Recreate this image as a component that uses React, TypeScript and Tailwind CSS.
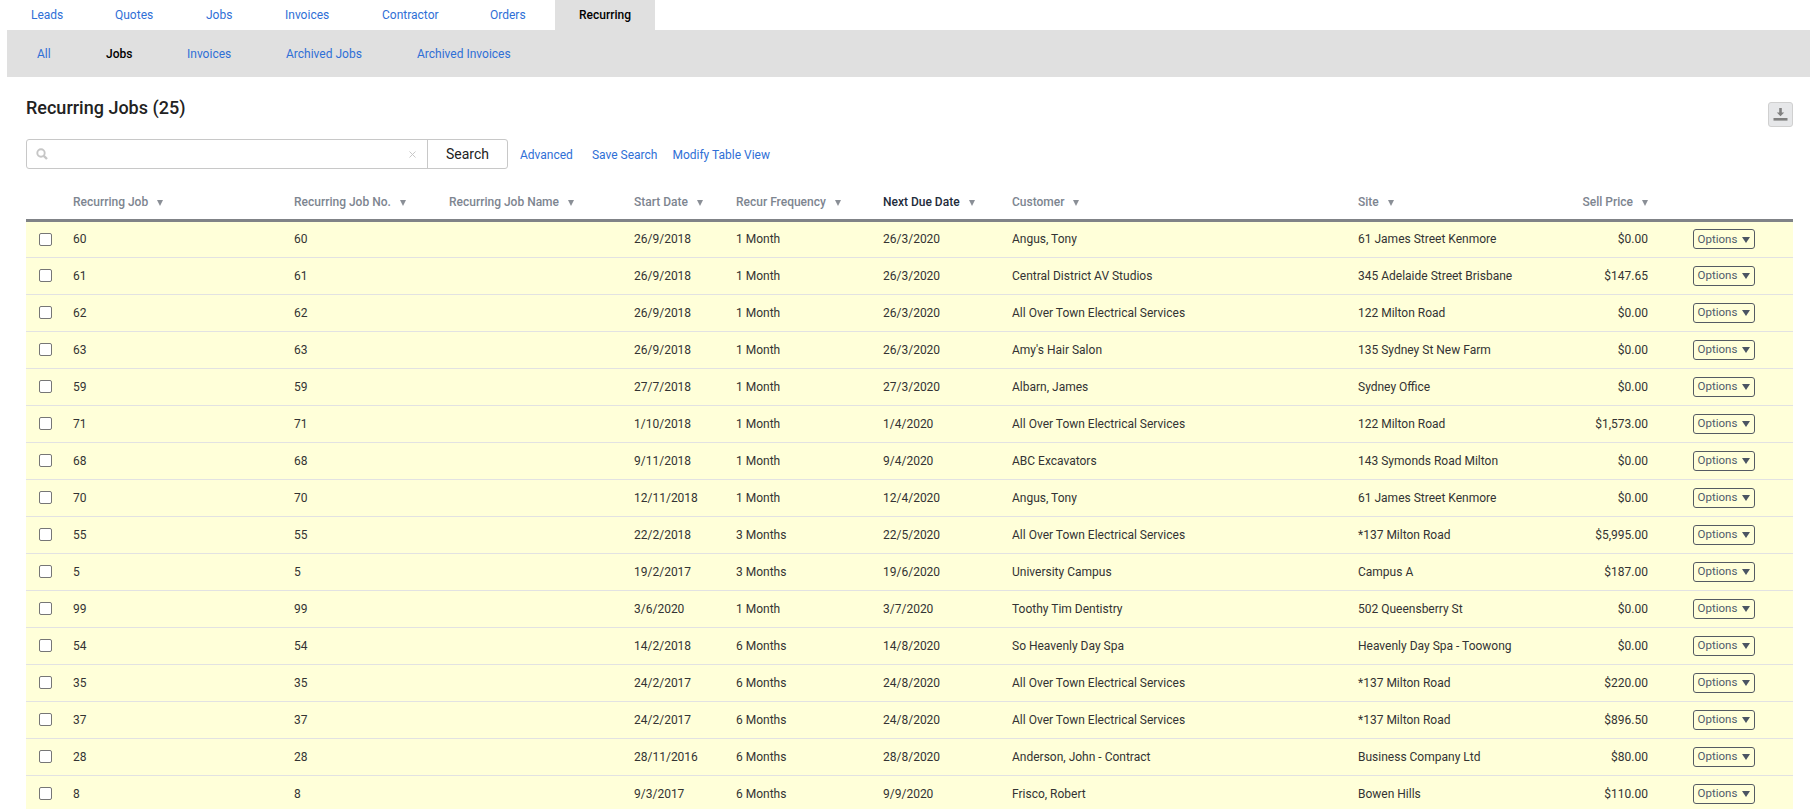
import React from 'react';
import { X } from 'lucide-react';

const topTabs = [
  { label: 'Leads', width: 'w-[84px]' },
  { label: 'Quotes', width: 'w-[91px]' },
  { label: 'Jobs', width: 'w-[79px]' },
  { label: 'Invoices', width: 'w-[97px]' },
  { label: 'Contractor', width: 'w-[108px]' },
  { label: 'Orders', width: 'w-[89px]' },
];

const subTabs = [
  { label: 'All', width: 'w-[69px]' },
  { label: 'Jobs', width: 'w-[81px]', active: true },
  { label: 'Invoices', width: 'w-[99px]' },
  { label: 'Archived Jobs', width: 'w-[131px]' },
  { label: 'Archived Invoices', width: 'w-[140px]' },
];

const columns = [
  { label: 'Recurring Job', width: 'w-[221px]' },
  { label: 'Recurring Job No.', width: 'w-[155px]' },
  { label: 'Recurring Job Name', width: 'w-[185px]' },
  { label: 'Start Date', width: 'w-[102px]' },
  { label: 'Recur Frequency', width: 'w-[147px]' },
  { label: 'Next Due Date', width: 'w-[129px]', active: true },
  { label: 'Customer', width: 'w-[346px]' },
  { label: 'Site', width: 'w-[224px]' },
];

const rows = [
  ['60', '60', '', '26/9/2018', '1 Month', '26/3/2020', 'Angus, Tony', '61 James Street Kenmore', '$0.00'],
  ['61', '61', '', '26/9/2018', '1 Month', '26/3/2020', 'Central District AV Studios', '345 Adelaide Street Brisbane', '$147.65'],
  ['62', '62', '', '26/9/2018', '1 Month', '26/3/2020', 'All Over Town Electrical Services', '122 Milton Road', '$0.00'],
  ['63', '63', '', '26/9/2018', '1 Month', '26/3/2020', "Amy's Hair Salon", '135 Sydney St New Farm', '$0.00'],
  ['59', '59', '', '27/7/2018', '1 Month', '27/3/2020', 'Albarn, James', 'Sydney Office', '$0.00'],
  ['71', '71', '', '1/10/2018', '1 Month', '1/4/2020', 'All Over Town Electrical Services', '122 Milton Road', '$1,573.00'],
  ['68', '68', '', '9/11/2018', '1 Month', '9/4/2020', 'ABC Excavators', '143 Symonds Road Milton', '$0.00'],
  ['70', '70', '', '12/11/2018', '1 Month', '12/4/2020', 'Angus, Tony', '61 James Street Kenmore', '$0.00'],
  ['55', '55', '', '22/2/2018', '3 Months', '22/5/2020', 'All Over Town Electrical Services', '*137 Milton Road', '$5,995.00'],
  ['5', '5', '', '19/2/2017', '3 Months', '19/6/2020', 'University Campus', 'Campus A', '$187.00'],
  ['99', '99', '', '3/6/2020', '1 Month', '3/7/2020', 'Toothy Tim Dentistry', '502 Queensberry St', '$0.00'],
  ['54', '54', '', '14/2/2018', '6 Months', '14/8/2020', 'So Heavenly Day Spa', 'Heavenly Day Spa - Toowong', '$0.00'],
  ['35', '35', '', '24/2/2017', '6 Months', '24/8/2020', 'All Over Town Electrical Services', '*137 Milton Road', '$220.00'],
  ['37', '37', '', '24/2/2017', '6 Months', '24/8/2020', 'All Over Town Electrical Services', '*137 Milton Road', '$896.50'],
  ['28', '28', '', '28/11/2016', '6 Months', '28/8/2020', 'Anderson, John - Contract', 'Business Company Ltd', '$80.00'],
  ['8', '8', '', '9/3/2017', '6 Months', '9/9/2020', 'Frisco, Robert', 'Bowen Hills', '$110.00'],
];

const SortArrow = () => (
  <span className="ml-[9px] inline-block h-0 w-0 border-x-[3.5px] border-t-[6px] border-x-transparent border-t-[#8a8f96] align-[0px]" />
);

const App: React.FC = () => {
  return (
    <div className="h-[809px] overflow-hidden bg-white font-['Roboto',sans-serif] text-[12px] text-[#333333]">
      {/* Top tabs */}
      <div className="flex h-[30px] pl-[7px]">
        {topTabs.map((tab) => (
          <a key={tab.label} className={`${tab.width} flex items-center pl-[24px] text-[#2f6fd6]`}>
            {tab.label}
          </a>
        ))}
        <a className="flex w-[100px] items-center justify-center bg-[#e0e0e0] font-medium text-black">Recurring</a>
      </div>

      {/* Sub tabs */}
      <div className="ml-[7px] flex h-[47px] items-center bg-[#e0e0e0] pl-[30px]">
        {subTabs.map((tab) => (
          <a key={tab.label} className={`${tab.width} ${tab.active ? 'font-medium text-black' : 'text-[#2f6fd6]'}`}>
            {tab.label}
          </a>
        ))}
      </div>

      <div className="pl-[26px] pr-[17px]">
        {/* Title */}
        <div className="flex h-[62px] items-start justify-between pt-[20px]">
          <h1 className="text-[18px] leading-[22px] font-medium text-[#222222]">Recurring Jobs (25)</h1>
          <button className="mt-[5px] flex h-[25px] w-[25px] items-center justify-center rounded-[3px] border border-[#d0d0d0] bg-[#e6e7e9]">
            <svg width="15" height="13" viewBox="0 0 15 13" fill="#808080">
              <path d="M6.2 0h2.6v4.5h2.4L7.5 8.3 3.8 4.5h2.4z" />
              <rect x="0.5" y="10" width="14" height="2.6" />
            </svg>
          </button>
        </div>

        {/* Search */}
        <div className="flex h-[31px] items-start">
          <div className="flex h-[30px] w-[482px] rounded-[3px] border border-[#c8c8c8]">
            <div className="flex flex-1 items-center justify-between pl-[9px] pr-[9px]">
              <svg width="12" height="12" viewBox="0 0 12 12" fill="none" stroke="#c6c6c6">
                <circle cx="5" cy="5" r="3.7" strokeWidth="1.9" />
                <path d="M7.8 7.8 11 11" strokeWidth="2.4" />
              </svg>
              <X size={11} strokeWidth={2} className="text-[#c4c4c4]" />
            </div>
            <button className="w-[80px] border-l border-[#c8c8c8] text-[14px] text-[#222222]">Search</button>
          </div>
          <a className="ml-[12px] self-center text-[#2f6fd6]">Advanced</a>
          <a className="ml-[19px] self-center text-[#2f6fd6]">Save Search</a>
          <a className="ml-[15px] self-center text-[#2f6fd6]">Modify Table View</a>
        </div>

        {/* Table */}
        <table className="w-[1767px] table-fixed border-collapse">
          <thead>
            <tr className="h-[50px] border-b-[3px] border-[#808387]">
              <th className="w-[47px]" />
              {columns.map((col) => (
                <th
                  key={col.label}
                  className={`${col.width} p-0 pt-[15px] text-left font-medium whitespace-nowrap ${col.active ? 'text-[#222b3a]' : 'text-[#7d8590]'}`}
                >
                  {col.label}
                  <SortArrow />
                </th>
              ))}
              <th className="w-[66px] p-0 pt-[15px] text-right font-medium whitespace-nowrap text-[#7d8590]">
                Sell Price
                <SortArrow />
              </th>
              <th className="w-[145px]" />
            </tr>
          </thead>
          <tbody>
            {rows.map((row) => (
              <tr key={row[0]} className="h-[37px] border-b border-[#e2e2e2] bg-[#ffffd9]">
                <td className="p-0 pl-[13px]">
                  <input
                    type="checkbox"
                    className="block h-[13px] w-[13px] appearance-none rounded-[2px] border border-[#767676] bg-white"
                  />
                </td>
                {row.slice(0, 8).map((cell, i) => (
                  <td key={i} className="p-0 whitespace-nowrap">{cell}</td>
                ))}
                <td className="p-0 text-right">{row[8]}</td>
                <td className="p-0 pl-[45px]">
                  <button className="flex h-[20px] w-[62px] items-center justify-center gap-[5px] rounded-[3px] border border-[#555b63] pt-[1px] text-[11.5px] text-[#4f5b6b]">
                    Options
                    <span className="h-0 w-0 border-x-[4px] border-t-[6px] border-x-transparent border-t-[#4b5563]" />
                  </button>
                </td>
              </tr>
            ))}
          </tbody>
        </table>
      </div>
    </div>
  );
};

export default App;
